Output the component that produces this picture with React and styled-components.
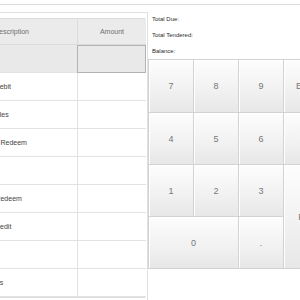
import React from 'react';
import styled, { createGlobalStyle } from 'styled-components';

const Global = createGlobalStyle`
  html, body { margin: 0; padding: 0; background: #fff; overflow: hidden; }
  body { font-family: "Liberation Sans", Arial, sans-serif; width: 300px; height: 300px; }
  * { box-sizing: border-box; }
`;

const Page = styled.div`
  width: 300px;
  height: 300px;
  overflow: hidden;
  display: flex;
  flex-direction: column;
`;

const TopBar = styled.div`
  height: 5px;
  border-bottom: 1px solid #dcdcdc;
  flex: none;
`;

const Main = styled.div`
  display: flex;
  align-items: flex-start;
`;

const LeftPanel = styled.div`
  flex: none;
  width: 208px;
  margin-left: -60px;
  margin-top: 7px;
  border: 1px solid #e0e0e0;
  padding: 5px 2px 0 4px;
  height: 320px;
`;

const Table = styled.div`
  display: grid;
  grid-template-columns: 132px 68px;
  border: 1px solid #dcdcdc;
  border-right-color: #d4d4d4;
`;

const HeadCell = styled.div`
  height: 26px;
  background: #ebebeb;
  border-bottom: 1px solid #dcdcdc;
  border-right: ${p => (p.$last ? 'none' : '1px solid #dcdcdc')};
  color: #6f6f6f;
  font-size: 7px;
  display: flex;
  align-items: center;
  justify-content: center;
`;

const Cell = styled.div`
  position: relative;
  height: 28px;
  background: ${p => (p.$selected ? '#e9e9e9' : '#fff')};
  border-bottom: 1px solid #e2e2e2;
  border-right: ${p => (p.$last ? 'none' : '1px solid #e2e2e2')};
  color: #444;
  font-size: 7px;
  display: flex;
  align-items: center;
  padding-left: ${p => (p.$last ? '0' : '28px')};
  white-space: nowrap;
`;

const AmountInput = styled.div`
  position: absolute;
  inset: 0 0 -1px -1px;
  border: 1px solid #b3b3b3;
  background: #e9e9e9;
`;

const RightPanel = styled.div`
  flex: 1;
  min-width: 0;
  display: flex;
  flex-direction: column;
`;

const Totals = styled.div`
  padding: 6px 0 0 4px;
`;

const TotalLine = styled.div`
  height: 16px;
  line-height: 16px;
  font-size: 6px;
  color: #2e2e2e;
`;

const Keypad = styled.div`
  display: grid;
  grid-template-columns: repeat(4, 44px);
  grid-template-rows: 52px 51px 51px 51px;
  gap: 1px;
  background: #d2d2d2;
  border: 1px solid #d2d2d2;
  width: 181px;
`;

const Key = styled.div`
  grid-column: span ${p => p.$cols || 1};
  grid-row: span ${p => p.$rows || 1};
  background: linear-gradient(to bottom, #fdfdfd 0%, #f3f3f3 50%, #e7e7e7 100%);
  box-shadow: inset 1px 1px 0 #ffffff;
  color: #777;
  font-size: 9px;
  display: flex;
  align-items: center;
  justify-content: center;
`;

const rows = [
  { desc: 'Cash', selected: true },
  { desc: 'Credit/Debit' },
  { desc: 'Card Sales' },
  { desc: 'Coupon Redeem' },
  { desc: '' },
  { desc: 'Points Redeem' },
  { desc: 'Store Credit' },
  { desc: '' },
  { desc: 'Vouchers' },
];

const keys = [
  { label: '7' }, { label: '8' }, { label: '9' }, { label: 'Back' },
  { label: '4' }, { label: '5' }, { label: '6' }, { label: 'C' },
  { label: '1' }, { label: '2' }, { label: '3' }, { label: 'Pay', rows: 2 },
  { label: '0', cols: 2 }, { label: '.' },
];

export default function App() {
  return (
    <Page>
      <Global />
      <TopBar />
      <Main>
        <LeftPanel>
          <Table>
            <HeadCell>Description</HeadCell>
            <HeadCell $last>Amount</HeadCell>
            {rows.map((r, i) => (
              <React.Fragment key={i}>
                <Cell $selected={r.selected}>{r.desc}</Cell>
                <Cell $last $selected={r.selected}>
                  {r.selected && <AmountInput />}
                </Cell>
              </React.Fragment>
            ))}
          </Table>
        </LeftPanel>
        <RightPanel>
          <Totals>
            <TotalLine>Total Due:</TotalLine>
            <TotalLine>Total Tendered:</TotalLine>
            <TotalLine>Balance:</TotalLine>
          </Totals>
          <Keypad>
            {keys.map((k, i) => (
              <Key key={i} $cols={k.cols} $rows={k.rows}>{k.label}</Key>
            ))}
          </Keypad>
        </RightPanel>
      </Main>
    </Page>
  );
}
